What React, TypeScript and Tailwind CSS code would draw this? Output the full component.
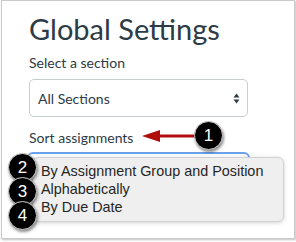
import React from "react";

function Badge({ n, className }: { n: string; className: string }) {
  return (
    <div
      className={`absolute w-[29px] h-[29px] rounded-full bg-black border border-[#d0d0d0] shadow-[1px_2px_3px_rgba(0,0,0,0.45)] flex items-center justify-center text-white text-[17px] leading-none ${className}`}
      style={{ fontFamily: '"Liberation Sans", Arial, sans-serif' }}
    >
      {n}
    </div>
  );
}

export default function App() {
  return (
    <div className="relative w-[296px] h-[242px] bg-white overflow-hidden">
      <div
        className="relative ml-[1px] w-[294px] h-[239px] border border-[#c9c9c9] shadow-[1px_1px_2px_rgba(0,0,0,0.25)] bg-white pl-[27px] pr-[45px] flex flex-col"
        style={{ fontFamily: 'Lato, "Open Sans", sans-serif' }}
      >
        <h1 className="pt-[11px] text-[29px] leading-[34px] text-[#2d3b45] font-normal">
          Global Settings
        </h1>
        <div className="mt-[7px] text-[14px] leading-[20px] text-[#2d3b45]">
          Select a section
        </div>
        <div className="mt-[6px] h-[38px] w-[219px] rounded-[5px] border border-[#c7cdd1] flex items-center justify-between pl-[8px] pr-[7px] text-[14px] text-[#2d3b45]">
          <span>All Sections</span>
          <svg width="7" height="11" viewBox="0 0 7 11">
            <path d="M3.5 0.5 L6.5 4.5 L0.5 4.5 Z" fill="#2d3b45" />
            <path d="M3.5 10.5 L6.5 6.5 L0.5 6.5 Z" fill="#2d3b45" />
          </svg>
        </div>
        <div className="mt-[11px] text-[14px] leading-[20px] text-[#2d3b45]">
          Sort assignments
        </div>
        <div className="mt-[4px] ml-[-2px] h-[40px] w-[223px] rounded-[6px] border-2 border-[#6aa0ec]" />
      </div>

      {/* arrow */}
      <svg className="absolute left-[141px] top-[129px]" width="60" height="14" viewBox="0 0 60 14">
        <path d="M1 7 L19 1 L19 13 Z" fill="#b00d0d" />
        <rect x="18" y="5.5" width="38" height="3" fill="#b00d0d" />
      </svg>
      <Badge n="1" className="left-[194px] top-[121px]" />

      {/* dropdown menu */}
      <div
        className="absolute left-[32px] top-[157px] w-[252px] h-[65px] rounded-[6px] border border-[#d2d2d2] bg-[#efefef] shadow-[0_1px_4px_rgba(0,0,0,0.18)] pt-[4px] pl-[8px] text-[14.4px] leading-[18px] text-[#262626] flex flex-col"
        style={{ fontFamily: '"Liberation Sans", Arial, sans-serif' }}
      >
        <div>By Assignment Group and Position</div>
        <div>Alphabetically</div>
        <div>By Due Date</div>
      </div>

      <Badge n="2" className="left-[8px] top-[153px]" />
      <Badge n="3" className="left-[8px] top-[177px]" />
      <Badge n="4" className="left-[8px] top-[201px]" />
    </div>
  );
}
